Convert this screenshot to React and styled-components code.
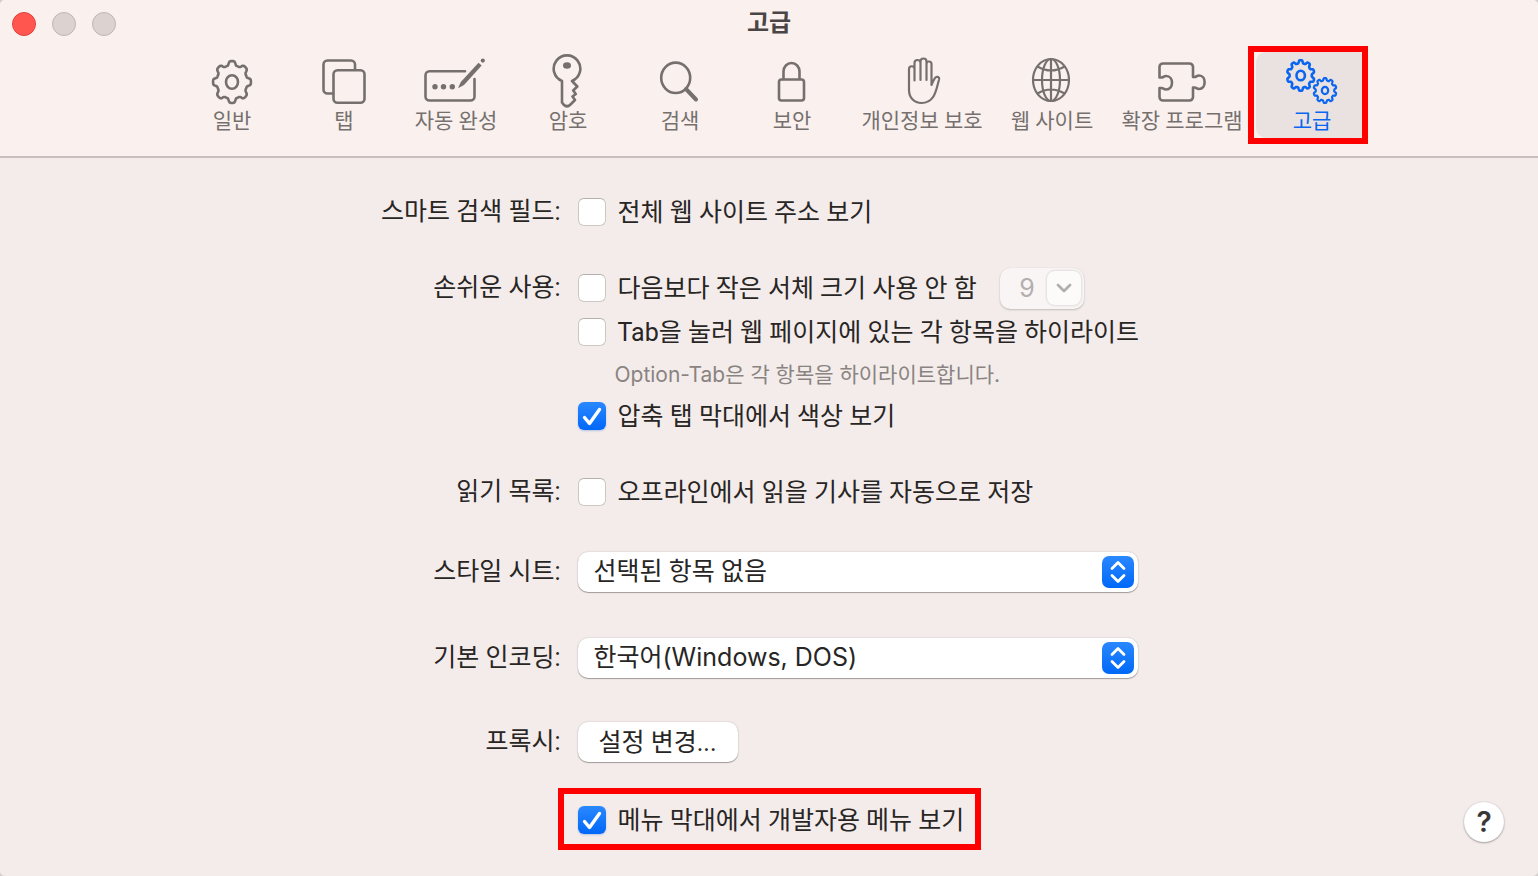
import React, { useState } from "react";
import styled, { createGlobalStyle, ThemeProvider } from "styled-components";

const theme = {
    header: '#faf0ee',
    body: '#f4ecea',
    line: '#c9c0be',
    text: '#282625',
    muted: '#75706e',
    hint: '#898381',
    blue: '#0a66f0',
    mark: '#ff0000',
    latin: 'Inter, "Noto Sans CJK KR", sans-serif',
}

const GlobalStyles = createGlobalStyle`
* {
    box-sizing: border-box;
}
body {
    margin: 0;
    background: #d3cecd;
    font-family: Roboto, "Noto Sans CJK KR", sans-serif;
}
button, input, select {
    font-family: inherit;
    margin: 0;
}
`

const Window = styled.div`
min-height: 100vh;
display: flex;
flex-direction: column;
border-radius: 5px;
overflow: hidden;
background: ${({ theme }) => theme.body};
color: ${({ theme }) => theme.text};
`

const Header = styled.header`
height: 158px;
background: ${({ theme }) => theme.header};
border-bottom: 2px solid ${({ theme }) => theme.line};
`

const TitleBar = styled.div`
display: grid;
grid-template-columns: 1fr auto 1fr;
align-items: center;
height: 48px;
margin-bottom: 4px;
padding: 0 12px;
`

const Lights = styled.div`
display: flex;
gap: 16px;
`

const Light = styled.button`
width: 24px;
height: 24px;
padding: 0;
border-radius: 50%;
border: 1px solid ${({ $on }) => ($on ? '#e2423d' : '#bfb5b4')};
background: ${({ $on }) => ($on ? '#ff5650' : '#dcd2d0')};
`

const Title = styled.h1`
margin: 0;
padding-bottom: 2px;
font-size: 24px;
line-height: 40px;
font-weight: 700;
color: #4a4645;
`

const Toolbar = styled.nav`
display: flex;
justify-content: center;
padding: 0 14px 0 20px;
`

const Tool = styled.button`
position: relative;
display: flex;
flex-direction: column;
align-items: center;
flex: none;
width: ${({ $wide }) => ($wide ? 148 : 112)}px;
height: 86px;
padding: 0;
border: 0;
border-radius: 10px;
font-size: 21px;
line-height: 26px;
white-space: nowrap;
background: ${({ $active }) => ($active ? '#eae2e0' : 'transparent')};
color: ${({ $active, theme }) => ($active ? theme.blue : theme.muted)};
svg {
    flex: none;
    fill: none;
    stroke: currentColor;
    stroke-width: 2.6;
    stroke-linecap: round;
    stroke-linejoin: round;
}
.solid {
    fill: currentColor;
    stroke: none;
}
`

const ToolMark = styled.span`
position: absolute;
inset: -6px 0 -6px -8px;
border: 6px solid ${({ theme }) => theme.mark};
pointer-events: none;
`

const Main = styled.main`
flex: 1;
display: grid;
grid-template-columns: 1fr auto 1fr;
padding: 33px 34px 34px 16px;
`

const Form = styled.form`
grid-column: 2;
font-size: 25px;
`

const Row = styled.div`
display: grid;
grid-template-columns: 178px 560px;
column-gap: 17px;
margin-bottom: ${({ $space }) => $space || 0}px;
`

const RowLabel = styled.label`
display: flex;
justify-content: flex-end;
line-height: 42px;
white-space: nowrap;
`

const Line = styled.div`
display: flex;
align-items: center;
height: 42px;
margin-bottom: ${({ $space }) => $space || 0}px;
`

const CheckLabel = styled.label`
position: relative;
display: inline-flex;
align-items: center;
gap: 12px;
line-height: 32px;
white-space: nowrap;
`

const CheckText = styled.span`
height: 32px;
padding-top: 1px;
`

const Box = styled.span`
display: grid;
width: 28px;
height: 28px;
> * {
    grid-area: 1 / 1;
}
svg {
    pointer-events: none;
}
`

const BoxInput = styled.input`
appearance: none;
width: 28px;
height: 28px;
border-radius: 6px;
border: 1px solid #cdc7c5;
border-top-color: #b5afad;
background: #fff;
&:checked {
    border: 0;
    background: linear-gradient(#2a88ff, #0068f8);
    box-shadow: 0 1px 2px rgba(0, 80, 220, 0.25);
}
`

const CheckMark = styled.span`
position: absolute;
inset: -16px -17px -14px -20px;
border: 6px solid ${({ theme }) => theme.mark};
pointer-events: none;
`

const Hint = styled.p`
margin: 0;
padding: 1px 0 0 37px;
height: 42px;
font-family: ${({ theme }) => theme.latin};
font-size: 21px;
line-height: 42px;
color: ${({ theme }) => theme.hint};
`

const Combo = styled.div`
display: flex;
align-items: center;
width: 84px;
height: 41px;
margin-left: 23px;
padding: 3px;
border-radius: 10px;
background: #f9f5f4;
box-shadow: 0 1px 2px rgba(0, 0, 0, 0.2), 0 0 1px rgba(0, 0, 0, 0.12);
`

const ComboInput = styled.input`
width: 44px;
padding: 0 12px 0 0;
border: 0;
background: transparent;
text-align: right;
font-family: ${({ theme }) => theme.latin};
font-size: 25px;
color: #b3afae;
`

const ComboButton = styled.button`
display: grid;
place-items: center;
width: 34px;
height: 34px;
padding: 0;
border: 0;
border-radius: 8px;
background: #fdfbfa;
box-shadow: 0 0 3px rgba(0, 0, 0, 0.2);
`

const Picker = styled.div`
display: grid;
align-items: center;
height: 42px;
> * {
    grid-area: 1 / 1;
}
`

const PickerSelect = styled.select`
appearance: none;
width: 100%;
height: 40px;
padding: 0 44px 2px 16px;
border: 0;
border-radius: 10px;
background: #fff;
box-shadow: 0 1px 1px rgba(0, 0, 0, 0.3), 0 0 2px rgba(0, 0, 0, 0.2);
font-family: ${({ $latin, theme }) => ($latin ? theme.latin : 'inherit')};
font-size: 25px;
color: inherit;
`

const PickerArrows = styled.span`
justify-self: end;
display: grid;
place-items: center;
width: 32px;
height: 32px;
margin-right: 4px;
border-radius: 7px;
background: linear-gradient(#2a88ff, #0068f8);
pointer-events: none;
`

const PushButton = styled.button`
width: 160px;
height: 40px;
padding: 0 0 4px;
border: 0;
border-radius: 10px;
background: #fff;
box-shadow: 0 1px 1px rgba(0, 0, 0, 0.3), 0 0 2px rgba(0, 0, 0, 0.2);
font-size: 25px;
color: inherit;
`

const HelpButton = styled.button`
grid-column: 3;
justify-self: end;
align-self: end;
width: 40px;
height: 40px;
padding: 0;
border: 0;
border-radius: 50%;
background: #fff;
box-shadow: 0 1px 2px rgba(0, 0, 0, 0.3), 0 0 2px rgba(0, 0, 0, 0.15);
font-family: ${({ theme }) => theme.latin};
font-size: 28px;
font-weight: 600;
line-height: 40px;
color: #3a3837;
`

// outline of a cog wheel with soft teeth, first tooth pointing up
function gearPath(cx, cy, rx, ry, teeth, depth) {
    const steps = teeth * 16;
    const points = [];
    for (let i = 0; i < steps; i++) {
        const a = (i / steps) * Math.PI * 2;
        const k = 1 - depth / 2 + (depth / 2) * Math.tanh(2.2 * Math.cos(a * teeth));
        points.push((cx + Math.sin(a) * rx * k).toFixed(2) + " " + (cy - Math.cos(a) * ry * k).toFixed(2));
    }
    return "M" + points.join("L") + "Z";
}

const icons = {
    general: (
        <>
            <path d={gearPath(32, 30, 19, 21, 8, 0.2)} />
            <ellipse cx="32" cy="30" rx="6" ry="6.8" />
        </>
    ),
    tabs: (
        <>
            <path d="M43 17v-4.500a4 4 0 0 0-4-4H15.500a4 4 0 0 0-4 4V37.500a4 4 0 0 0 4 4H21" />
            <rect x="21.500" y="18.300" width="31" height="32.500" rx="4" />
        </>
    ),
    autofill: (
        <>
            <path d="M41 19.300H5.500a4 4 0 0 0-4 4V44.500a4 4 0 0 0 4 4H46.500a4 4 0 0 0 4-4V27" />
            <circle className="solid" cx="11" cy="34.700" r="2.700" />
            <circle className="solid" cx="19.500" cy="34.700" r="2.700" />
            <circle className="solid" cx="28.300" cy="34.700" r="2.700" />
            <path className="solid" d="M34 36.300l2.800-6.300L54.500 10.800l3.200 2.800L40 33z" />
            <circle className="solid" cx="58.800" cy="8.600" r="2.100" />
        </>
    ),
    passwords: (
        <>
            <path d="M26 29A13.300 13.300 0 1 1 36 29L41.300 34.500 37.200 38.500 39.800 42 36.500 44.500 39 48 34.500 52.500Q31 56 27.500 52.500L26 50.500Z" />
            <ellipse className="solid" cx="31" cy="13.500" rx="4" ry="3.200" />
        </>
    ),
    search: (
        <>
            <ellipse cx="27.700" cy="25.800" rx="14.500" ry="15.200" />
            <path d="M38 37L48 47.500" strokeWidth="4" />
        </>
    ),
    security: (
        <>
            <rect x="19" y="27.500" width="25" height="21" rx="2.500" />
            <path d="M23.500 27V19.500a8 8.500 0 0 1 16 0V27" />
        </>
    ),
    privacy: (
        <path
            strokeWidth="2.200"
            d="M19 38V17a2.700 2.700 0 0 1 5.500 0V28.500M24.500 17V11a3 3 0 0 1 6 0V28M30.500 11V9.500a3 3 0 0 1 6 0V28M36.500 12a2.500 2.500 0 0 1 5 0V33c1.500-3.500 2.500-6 4-7.500c1.800-1.600 4.200-.2 3.600 2C47 34 46.500 40 43 45C40.500 49 37 51 31.500 51C24 51 19 45.500 19 38"
        />
    ),
    websites: (
        <g strokeWidth="2.200">
            <ellipse cx="31" cy="28" rx="18" ry="21" />
            <ellipse cx="31" cy="28" rx="9" ry="21" />
            <path d="M31 7V49M13 28H49M17.500 14.500Q31 22.500 44.500 14.500M17.500 41.500Q31 33.500 44.500 41.500" />
        </g>
    ),
    extensions: (
        <path d="M9.500 25.500V15a3.500 3.500 0 0 1 3.500-3.500H39.500a3.500 3.500 0 0 1 3.500 3.500V25H44.500C46.500 25 46.500 23.500 49 23.500C56.500 23.500 56.500 37 49 37C46.500 37 46.500 35.500 44.500 35.500H43V45a3.500 3.500 0 0 1-3.500 3.500H13a3.500 3.500 0 0 1-3.500-3.500V36H11.500C13.500 36 13.500 37.500 16 37.500C24 37.500 24 24 16 24C13.500 24 13.500 25.500 11.500 25.500Z" />
    ),
    advanced: (
        <>
            <path d={gearPath(20.7, 23.500, 13.800, 15.300, 10, 0.2)} />
            <ellipse cx="20.700" cy="23.500" rx="4.200" ry="4.800" />
            <path d={gearPath(45, 38.500, 11.500, 12.500, 10, 0.2)} strokeWidth="2.200" />
            <ellipse cx="45" cy="38.500" rx="3.200" ry="3.600" strokeWidth="2.200" />
        </>
    ),
}

const tools = [
    { id: "general", label: "일반" },
    { id: "tabs", label: "탭" },
    { id: "autofill", label: "자동 완성" },
    { id: "passwords", label: "암호" },
    { id: "search", label: "검색" },
    { id: "security", label: "보안" },
    { id: "privacy", label: "개인정보 보호", wide: true },
    { id: "websites", label: "웹 사이트" },
    { id: "extensions", label: "확장 프로그램", wide: true },
    { id: "advanced", label: "고급", active: true },
]

function Check({ id, checked, marked, children }) {
    const [on, setOn] = useState(!!checked);
    return (
        <CheckLabel htmlFor={id}>
            <Box>
                <BoxInput id={id} type="checkbox" checked={on} onChange={() => setOn(!on)} />
                {on && (
                    <svg width="28" height="28" viewBox="0 0 28 28" fill="none" stroke="#fff" strokeWidth="3.4" strokeLinecap="round" strokeLinejoin="round">
                        <path d="M6.500 15.500L11.500 21.500L21.500 7.500" />
                    </svg>
                )}
            </Box>
            <CheckText>{children}</CheckText>
            {marked && <CheckMark />}
        </CheckLabel>
    );
}

function Select({ id, option, latin }) {
    return (
        <Picker>
            <PickerSelect id={id} $latin={latin}>
                <option>{option}</option>
            </PickerSelect>
            <PickerArrows>
                <svg width="20" height="26" viewBox="0 0 20 26" fill="none" stroke="#fff" strokeWidth="2.8" strokeLinecap="round" strokeLinejoin="round">
                    <path d="M4 9.500L10 3.500L16 9.500M4 16.500L10 22.500L16 16.500" />
                </svg>
            </PickerArrows>
        </Picker>
    );
}

export default function App() {
    return (
        <ThemeProvider theme={theme}>
            <GlobalStyles />
            <Window>
                <Header>
                    <TitleBar>
                        <Lights>
                            <Light $on aria-label="닫기" />
                            <Light aria-label="최소화" />
                            <Light aria-label="확대" />
                        </Lights>
                        <Title>고급</Title>
                    </TitleBar>
                    <Toolbar>
                        {tools.map((tool) => (
                            <Tool key={tool.id} type="button" $wide={tool.wide} $active={tool.active}>
                                <svg width="64" height="56" viewBox="0 0 64 56">{icons[tool.id]}</svg>
                                {tool.label}
                                {tool.active && <ToolMark />}
                            </Tool>
                        ))}
                    </Toolbar>
                </Header>
                <Main>
                    <Form onSubmit={(e) => e.preventDefault()}>
                        <Row $space={34}>
                            <RowLabel htmlFor="address">스마트 검색 필드:</RowLabel>
                            <Line>
                                <Check id="address">전체 웹 사이트 주소 보기</Check>
                            </Line>
                        </Row>
                        <Row $space={34}>
                            <RowLabel htmlFor="min-font">손쉬운 사용:</RowLabel>
                            <div>
                                <Line $space={2}>
                                    <Check id="min-font">다음보다 작은 서체 크기 사용 안 함</Check>
                                    <Combo>
                                        <ComboInput aria-label="서체 크기" defaultValue="9" disabled />
                                        <ComboButton type="button" aria-label="크기 선택" disabled>
                                            <svg width="18" height="12" viewBox="0 0 18 12" fill="none" stroke="#b3afae" strokeWidth="2.8" strokeLinecap="round" strokeLinejoin="round">
                                                <path d="M3 3L9 9L15 3" />
                                            </svg>
                                        </ComboButton>
                                    </Combo>
                                </Line>
                                <Line>
                                    <Check id="tab-key">Tab을 눌러 웹 페이지에 있는 각 항목을 하이라이트</Check>
                                </Line>
                                <Hint>Option-Tab은 각 항목을 하이라이트합니다.</Hint>
                                <Line>
                                    <Check id="tab-color" checked>압축 탭 막대에서 색상 보기</Check>
                                </Line>
                            </div>
                        </Row>
                        <Row $space={38}>
                            <RowLabel htmlFor="offline">읽기 목록:</RowLabel>
                            <Line>
                                <Check id="offline">오프라인에서 읽을 기사를 자동으로 저장</Check>
                            </Line>
                        </Row>
                        <Row $space={44}>
                            <RowLabel htmlFor="stylesheet">스타일 시트:</RowLabel>
                            <Select id="stylesheet" option="선택된 항목 없음" />
                        </Row>
                        <Row $space={42}>
                            <RowLabel htmlFor="encoding">기본 인코딩:</RowLabel>
                            <Select id="encoding" option="한국어(Windows, DOS)" latin />
                        </Row>
                        <Row $space={36}>
                            <RowLabel htmlFor="proxy">프록시:</RowLabel>
                            <Line>
                                <PushButton id="proxy" type="button">설정 변경...</PushButton>
                            </Line>
                        </Row>
                        <Row>
                            <span />
                            <Line>
                                <Check id="develop" checked marked>메뉴 막대에서 개발자용 메뉴 보기</Check>
                            </Line>
                        </Row>
                    </Form>
                    <HelpButton type="button" aria-label="도움말">?</HelpButton>
                </Main>
            </Window>
        </ThemeProvider>
    );
}
